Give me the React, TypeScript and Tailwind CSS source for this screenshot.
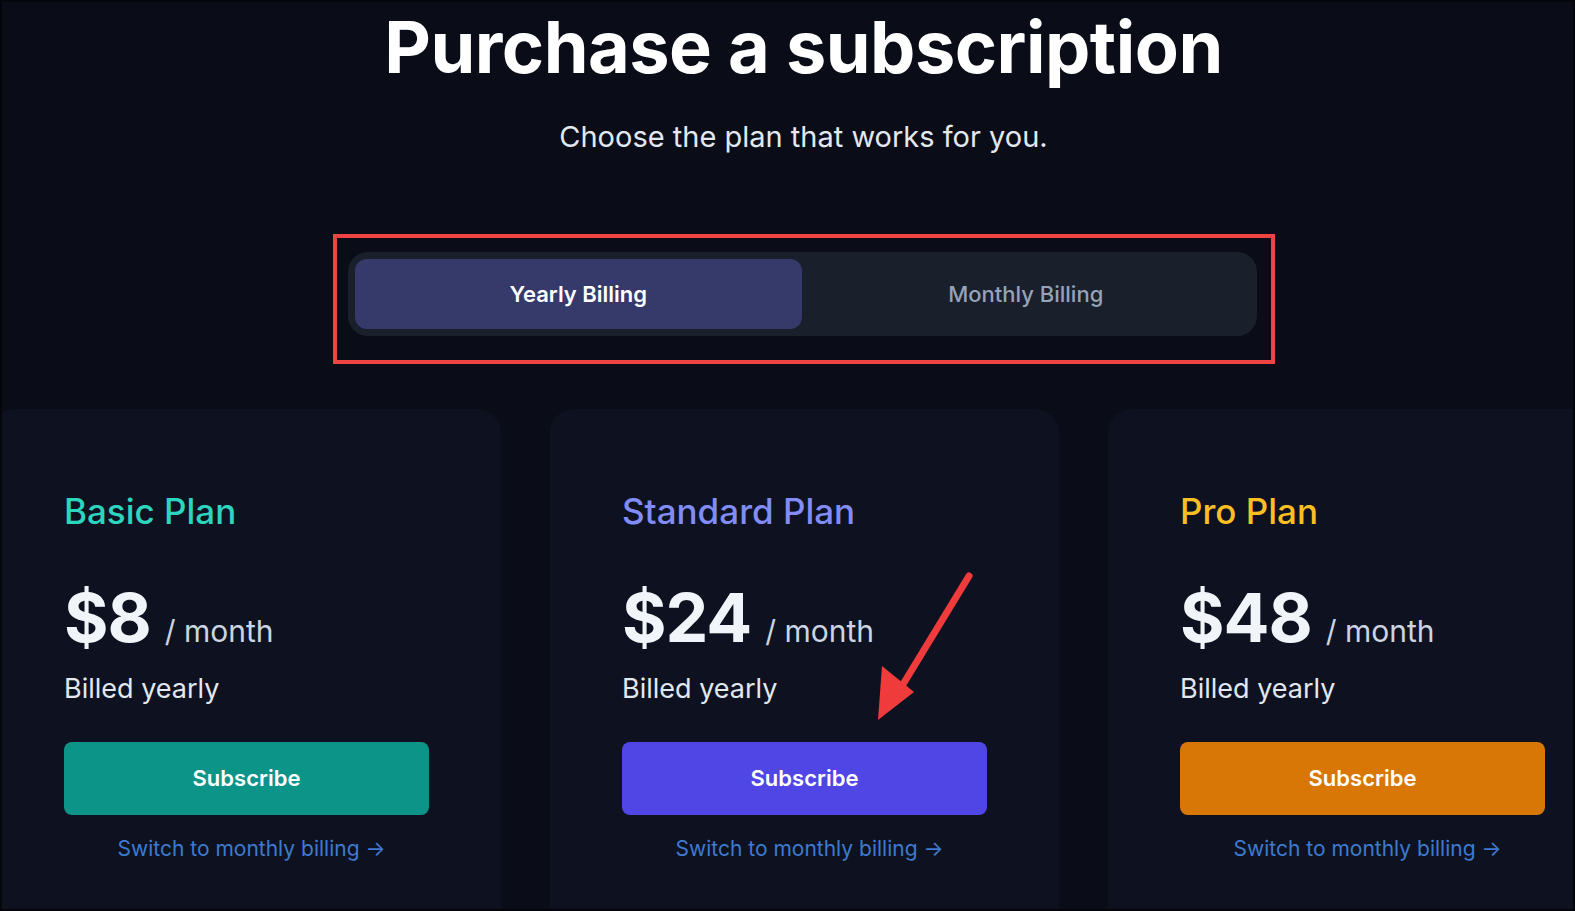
import React from 'react';

type Plan = {
  name: string;
  price: string;
  nameColor: string;
  buttonColor: string;
};

const plans: Plan[] = [
  { name: 'Basic Plan', price: '$8', nameColor: 'text-[#2dd4bf]', buttonColor: 'bg-[#0d9488]' },
  { name: 'Standard Plan', price: '$24', nameColor: 'text-[#818cf8]', buttonColor: 'bg-[#4f46e5]' },
  { name: 'Pro Plan', price: '$48', nameColor: 'text-[#fbbf24]', buttonColor: 'bg-[#d97706]' },
];

function PlanCard({ plan }: { plan: Plan }) {
  return (
    <div className="flex h-[520px] w-[509px] shrink-0 flex-col rounded-[24px] bg-[#0e1220] px-[72px] pt-[80px]">
      <h2 className={`text-[35px] font-medium leading-[44px] ${plan.nameColor}`}>{plan.name}</h2>
      <div className="mt-[44px] flex items-baseline gap-[14px]">
        <span className="text-[68px] font-bold leading-[80px] tracking-[-1px] text-[#f1f5f9]">{plan.price}</span>
        <span className="text-[30px] text-[#cbd5e1]">/ month</span>
      </div>
      <p className="mt-[14px] text-[27px] leading-[36px] text-[#e2e8f0]">Billed yearly</p>
      <button
        type="button"
        className={`mt-[35px] h-[73px] w-[365px] rounded-[8px] text-[22px] font-semibold text-white ${plan.buttonColor}`}
      >
        Subscribe
      </button>
      <a className="mt-[18px] w-[365px] pl-[10px] text-center text-[21px] text-[#3d7ad0]">Switch to monthly billing →</a>
    </div>
  );
}

export default function App() {
  return (
    <div
      className="relative h-[911px] w-[1575px] overflow-hidden border-2 border-[#04060b] bg-[#0a0d17]"
      style={{ fontFamily: 'Inter, "Noto Sans", sans-serif' }}
    >
      <div className="flex flex-col items-center pl-[32px]">
        <h1 className="text-[72px] font-bold leading-[90px] tracking-[-0.5px] text-white">Purchase a subscription</h1>
        <p className="mt-[26px] text-[29px] leading-[38px] text-[#e2e8f0]">Choose the plan that works for you.</p>

        {/* billing toggle with highlight box */}
        <div className="mt-[78px] border-4 border-[#ef4444] pb-[24px] pl-[11px] pr-[14px] pt-[14px]">
          <div className="flex h-[84px] w-[909px] rounded-[20px] bg-[#1a1f2c] p-[7px]">
            <button
              type="button"
              className="flex-1 rounded-[12px] bg-[#363a6a] text-[22px] font-semibold text-white"
            >
              Yearly Billing
            </button>
            <button type="button" className="flex-1 text-[22px] font-medium text-[#94a3b8]">
              Monthly Billing
            </button>
          </div>
        </div>
      </div>

      <div className="ml-[-10px] mt-[45px] flex gap-[49px]">
        {plans.map((p) => (
          <PlanCard key={p.name} plan={p} />
        ))}
      </div>

      {/* annotation arrow */}
      <svg className="pointer-events-none absolute left-0 top-0" width="1575" height="911" aria-hidden>
        <line x1="967" y1="574" x2="900" y2="684" stroke="#ef3b3b" strokeWidth="7" strokeLinecap="round" />
        <polygon points="876,718 880,664 912,690" fill="#ef3b3b" />
      </svg>
    </div>
  );
}
